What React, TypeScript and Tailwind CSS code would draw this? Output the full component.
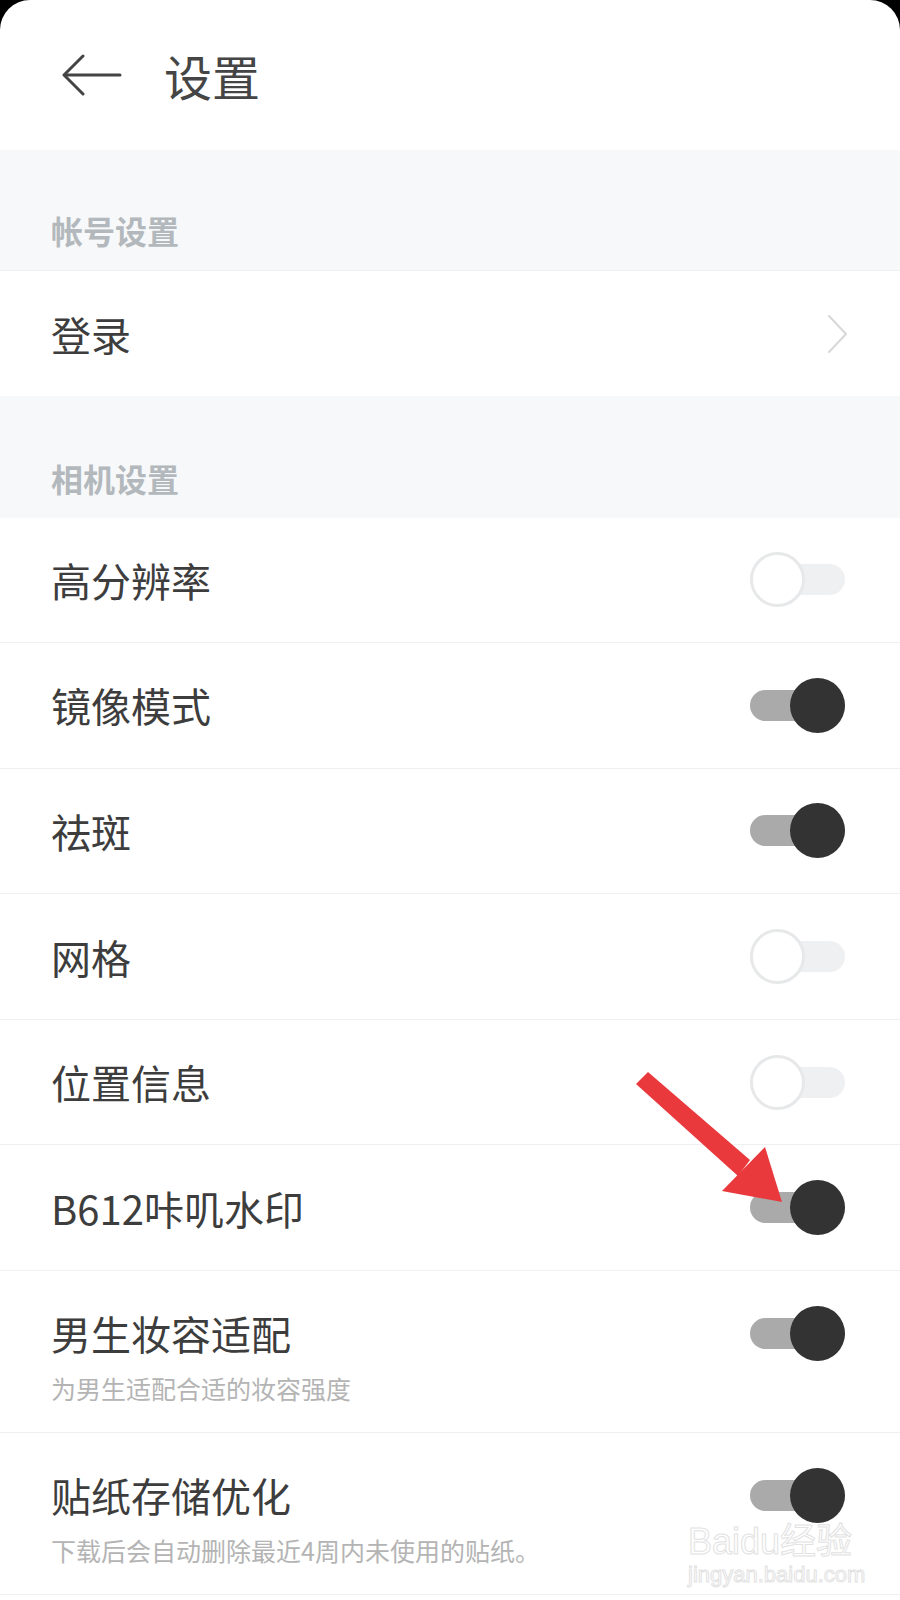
import React from 'react';

const font = { fontFamily: '"Noto Sans CJK SC", "Noto Sans", sans-serif' };

interface RowProps {
  title: string;
  on: boolean;
}

// Toggle switch: track with a round knob sitting on top of it
function Toggle({ on }: { on: boolean }) {
  return (
    <div className="relative w-[95px] h-[55px] flex items-center shrink-0">
      <div className={`w-full h-[31px] rounded-full ${on ? 'bg-[#aaaaaa]' : 'bg-[#eff0f2]'}`} />
      {on ? (
        <div className="absolute right-0 top-0 w-[55px] h-[55px] rounded-full bg-[#333333]" />
      ) : (
        <div className="absolute left-0 top-0 w-[55px] h-[55px] rounded-full bg-white border-[3px] border-[#e7e8e9]" />
      )}
    </div>
  );
}

function SectionHeader({ title, h }: { title: string; h: string }) {
  return (
    <div className={`${h} bg-[#f7f8f9] flex items-end pb-[24px] pl-[51px]`}>
      <span className="text-[32px] leading-[32px] font-bold text-[#b3b8bd]">{title}</span>
    </div>
  );
}

function SwitchRow({ title, on }: RowProps) {
  return (
    <div className="h-[125.6px] border-b border-[#f0f0f0] flex items-center justify-between pl-[51px] pr-[55px]">
      <span className="text-[40px] leading-[52px] text-[#3d3d3d]">{title}</span>
      <Toggle on={on} />
    </div>
  );
}

function DescRow({ title, desc, on }: RowProps & { desc: string }) {
  return (
    <div className="h-[162px] border-b border-[#f0f0f0] pt-[36px] pl-[51px] pr-[55px]">
      <div className="h-[52px] flex items-center justify-between">
        <span className="text-[40px] leading-[52px] text-[#3d3d3d]">{title}</span>
        <Toggle on={on} />
      </div>
      <div className="mt-[13px] text-[25px] leading-[32px] text-[#b4b4b4]">{desc}</div>
    </div>
  );
}

const cameraRows = [
  { title: '高分辨率', on: false },
  { title: '镜像模式', on: true },
  { title: '祛斑', on: true },
  { title: '网格', on: false },
  { title: '位置信息', on: false },
  { title: 'B612咔叽水印', on: true },
];

export default function App() {
  return (
    <div className="w-[900px] h-[1600px] bg-black" style={font}>
      <div className="relative w-full h-full bg-white rounded-t-[30px] overflow-hidden">
        {/* top bar */}
        <div className="h-[150px] flex items-center pl-[62px]">
          <svg width="60" height="42" viewBox="0 0 60 42" fill="none" stroke="#444" strokeWidth="3" strokeLinecap="round" strokeLinejoin="round">
            <path d="M58 21H3" />
            <path d="M21 2L2 21l19 19" />
          </svg>
          <span className="ml-[42px] text-[48px] leading-[60px] text-[#454545]">设置</span>
        </div>

        <SectionHeader title="帐号设置" h="h-[120px]" />
        <div className="h-[126px] border-t border-[#f0f0f0] flex items-center justify-between pl-[51px] pr-[52px]">
          <span className="text-[40px] leading-[52px] text-[#3d3d3d]">登录</span>
          <svg width="21" height="38" viewBox="0 0 21 38" fill="none" stroke="#d8d8d8" strokeWidth="2" strokeLinecap="round" strokeLinejoin="round">
            <path d="M2 1l17 18L2 37" />
          </svg>
        </div>

        <SectionHeader title="相机设置" h="h-[121.5px]" />
        {cameraRows.map((r) => (
          <SwitchRow key={r.title} title={r.title} on={r.on} />
        ))}
        <DescRow title="男生妆容适配" desc="为男生适配合适的妆容强度" on={true} />
        <DescRow title="贴纸存储优化" desc="下载后会自动删除最近4周内未使用的贴纸。" on={true} />

        {/* red annotation arrow */}
        <svg className="absolute left-0 top-0 pointer-events-none" width="900" height="1600">
          <polygon points="636,1084 648,1072 750,1160 738,1176" fill="#e9393c" />
          <polygon points="782,1202 722,1191 765,1147" fill="#e9393c" />
        </svg>

        {/* watermark */}
        <div className="absolute left-[688px] top-[1522px] flex flex-col items-start pointer-events-none">
          <span
            className="text-[36px] leading-[40px] text-white/60 [-webkit-text-stroke:1px_#e2e2e2]"
            style={{ fontFamily: '"Liberation Sans", "Noto Sans CJK SC", sans-serif' }}
          >
            Baidu经验
          </span>
          <span
            className="text-[22px] leading-[26px] text-white/60 [-webkit-text-stroke:1px_#e2e2e2]"
            style={{ fontFamily: '"Liberation Sans", sans-serif' }}
          >
            jingyan.baidu.com
          </span>
        </div>
      </div>
    </div>
  );
}
